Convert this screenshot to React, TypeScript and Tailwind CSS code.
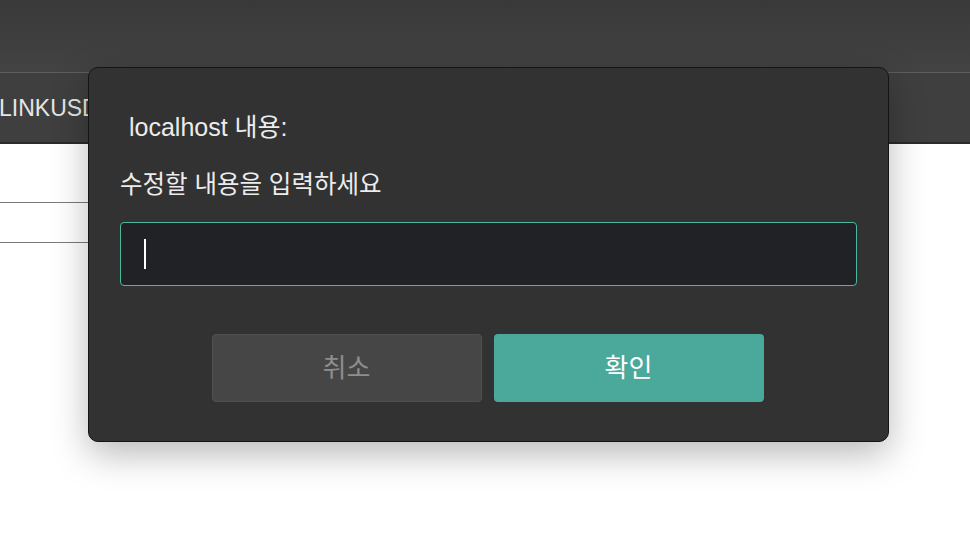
import React from "react";

export default function App() {
  const font = { fontFamily: '"Liberation Sans", "Noto Sans CJK KR", sans-serif' };
  return (
    <div className="relative w-[970px] h-[540px] overflow-hidden bg-white" style={font}>
      {/* background page */}
      <div className="h-[72px] bg-gradient-to-b from-[#393939] to-[#434343]" />
      <div className="h-px bg-[#5e5e5e]" />
      <div className="h-[69px] bg-[#3f3f3f] flex items-center">
        <span className="text-[23px] text-[#e6e6e6] -ml-[1px] pt-[2px]">LINKUSDT</span>
      </div>
      <div className="h-[2px] bg-[#2a2a2a]" />
      <div className="h-[58px]" />
      <div className="h-px w-[300px] bg-[#7a7a7a]" />
      <div className="h-[39px]" />
      <div className="h-px w-[300px] bg-[#7a7a7a]" />

      {/* modal dialog */}
      <div className="absolute left-[88px] top-[67px] w-[801px] h-[375px] rounded-[10px] border border-[#141414] bg-[#323232] shadow-[0_12px_36px_rgba(0,0,0,0.28)] px-[31px] pt-[44px] flex flex-col">
        <div className="ml-[9px] text-[25px] leading-[30px] text-[#ececec]">localhost 내용:</div>
        <div className="mt-[28px] text-[24.5px] leading-[30px] text-[#ececec]">수정할 내용을 입력하세요</div>
        <div className="mt-[22px] h-[64px] w-full rounded-[4px] border border-[#4cb8a0] bg-[#212225] flex items-center pl-[23px]">
          <div className="w-[2px] h-[30px] bg-white" />
        </div>
        <div className="mt-[48px] flex justify-center gap-[12px] pr-[2px]">
          <div className="w-[270px] h-[68px] rounded-[4px] border border-[#505050] bg-[#464646] flex items-center justify-center text-[26px] text-[#8e8e8e]">
            취소
          </div>
          <div className="w-[270px] h-[68px] rounded-[4px] bg-[#4ba99c] flex items-center justify-center text-[26px] text-white">
            확인
          </div>
        </div>
      </div>
    </div>
  );
}
